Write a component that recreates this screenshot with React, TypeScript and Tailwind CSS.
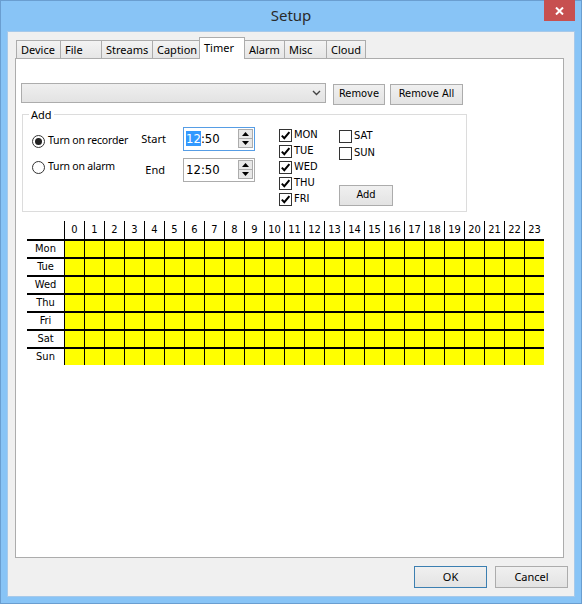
import React from "react";

const tahoma = "font-['DejaVu_Sans_Condensed','Liberation_Sans',sans-serif]";
const segoe = "font-['Noto_Sans','Liberation_Sans',sans-serif] whitespace-nowrap";

const tabs = [
  { label: "Device", w: "w-[45px]" },
  { label: "File", w: "w-[42px]" },
  { label: "Streams", w: "w-[52px]" },
  { label: "Caption", w: "w-[48px]" },
  { label: "Timer", w: "w-[46px]" },
  { label: "Alarm", w: "w-[41px]" },
  { label: "Misc", w: "w-[43px]" },
  { label: "Cloud", w: "w-[40px]" },
];

const days = ["Mon", "Tue", "Wed", "Thu", "Fri", "Sat", "Sun"];
const hours = Array.from({ length: 24 }, (_, i) => i);

function CheckBox({ checked, label }: { checked: boolean; label: string }) {
  return (
    <div className="flex h-[16px] items-center">
      <div className="flex h-[13px] w-[13px] items-center justify-center border border-[#333] bg-white">
        {checked && (
          <svg width="11" height="11" viewBox="0 0 11 11">
            <path d="M1.8 5.6 L4.3 8.2 L9.4 2.2" fill="none" stroke="#000" strokeWidth="2" />
          </svg>
        )}
      </div>
      <span className={`${tahoma} ml-[2px] text-[11px] text-black`}>{label}</span>
    </div>
  );
}

function Radio({ checked, label }: { checked: boolean; label: string }) {
  return (
    <div className="flex h-[16px] items-center">
      <div className="flex h-[13px] w-[13px] shrink-0 items-center justify-center rounded-full border border-[#333] bg-white">
        {checked && <div className="h-[7px] w-[7px] rounded-full bg-[#222]" />}
      </div>
      <span className={`${segoe} ml-[3px] text-[10.5px] tracking-[-0.2px] text-black`}>{label}</span>
    </div>
  );
}

function SpinBox({ focused }: { focused?: boolean }) {
  return (
    <div
      className={`flex h-[24px] w-[72px] items-center bg-white pl-[2px] pr-[1px] ${
        focused ? "border border-[#569de5]" : "border border-[#acacac]"
      }`}
    >
      <span className={`${tahoma} text-[13px] leading-[16px] text-black`}>
        {focused ? <span className="bg-[#3399ff] text-white">12</span> : "12"}:50
      </span>
      <div className="ml-auto flex h-[20px] w-[15px] flex-col">
        <div className="flex h-[10px] items-center justify-center border border-[#acacac] bg-[#e8e8e8]">
          <svg width="7" height="4" viewBox="0 0 7 4">
            <path d="M0 4 L3.5 0 L7 4 Z" fill="#000" />
          </svg>
        </div>
        <div className="-mt-px flex h-[10px] items-center justify-center border border-[#acacac] bg-[#e8e8e8]">
          <svg width="7" height="4" viewBox="0 0 7 4">
            <path d="M0 0 L3.5 4 L7 0 Z" fill="#000" />
          </svg>
        </div>
      </div>
    </div>
  );
}

function Button({ label, w, font }: { label: string; w: string; font: string }) {
  return (
    <div
      className={`${w} ${font} flex h-[21px] items-center justify-center border border-[#acacac] bg-linear-to-b from-[#f0f0f0] to-[#e3e3e3] text-[11px] text-black`}
    >
      {label}
    </div>
  );
}

export default function App() {
  return (
    <div className="flex h-[604px] w-[582px] flex-col border border-[#6a9ed0] bg-[#88c4f6]">
      {/* title bar */}
      <div className="grid h-[30px] shrink-0 grid-cols-[1fr_auto_1fr]">
        <div />
        <div className={`${segoe} pt-[4px] text-[15px] leading-[20px] text-[#2a2a2a]`}>Setup</div>
        <div className="flex justify-end pr-[6px]">
          <div className="-mt-px flex h-[21px] w-[31px] items-center justify-center bg-[#c75050]">
            <svg width="9" height="8" viewBox="0 0 9 8">
              <path d="M1 0.5 L8 7.5 M8 0.5 L1 7.5" stroke="#fff" strokeWidth="2" />
            </svg>
          </div>
        </div>
      </div>

      {/* client */}
      <div className="mx-[6px] mb-[6px] flex flex-1 flex-col border border-[#a6c9ea] bg-[#f0f0f0] pt-[6px]">
        {/* tabs */}
        <div className="flex h-[20px] items-end pl-[8px]">
          {tabs.map((t) => {
            const sel = t.label === "Timer";
            return (
              <div
                key={t.label}
                className={`${t.w} ${segoe} -ml-px flex items-start border border-b-0 border-[#acacac] pl-[4px] text-[11px] text-black first:ml-0 ${
                  sel
                    ? "relative z-10 mb-[-1px] h-[22px] bg-white pt-[2px]"
                    : "h-[18px] bg-linear-to-b from-[#f3f3f3] to-[#e6e6e6] pt-[1px]"
                }`}
              >
                <span className="leading-[15px]">{t.label}</span>
              </div>
            );
          })}
        </div>

        {/* panel */}
        <div className="ml-[7px] flex h-[500px] w-[549px] flex-col border border-[#acacac] bg-white">
          {/* combobox row */}
          <div className="ml-[5px] mt-[24px] flex items-start">
            <div className="flex h-[20px] w-[305px] items-center justify-end border border-[#acacac] bg-linear-to-b from-[#efefef] to-[#e3e3e3] pr-[4px]">
              <svg width="9" height="6" viewBox="0 0 9 6">
                <path d="M1 1 L4.5 4.5 L8 1" fill="none" stroke="#444" strokeWidth="1.4" />
              </svg>
            </div>
            <div className="ml-[7px] mt-px">
              <Button label="Remove" w="w-[52px]" font={tahoma} />
            </div>
            <div className="ml-[5px] mt-px">
              <Button label="Remove All" w="w-[73px]" font={tahoma} />
            </div>
          </div>

          {/* Add group */}
          <div className="relative ml-[6px] mt-[9px] flex h-[98px] w-[445px] items-start border border-[#dcdcdc]">
            <span className={`${segoe} absolute -top-[8px] left-[6px] bg-white px-[2px] text-[11px] leading-[15px] text-black`}>
              Add
            </span>

            <div className="ml-[9px] mt-[18px] flex w-[100px] flex-col gap-[10px]">
              <Radio checked label="Turn on recorder" />
              <Radio checked={false} label="Turn on alarm" />
            </div>

            <div className="mt-[12px] flex flex-col gap-[7px]">
              <div className="flex items-center">
                <span className={`${segoe} w-[34px] text-right text-[11px] text-black`}>Start</span>
                <div className="ml-[17px]">
                  <SpinBox focused />
                </div>
              </div>
              <div className="flex items-center">
                <span className={`${segoe} w-[34px] pr-[1px] text-right text-[11px] text-black`}>End</span>
                <div className="ml-[17px]">
                  <SpinBox />
                </div>
              </div>
            </div>

            <div className="ml-[24px] mt-[12px] flex w-[60px] flex-col">
              <CheckBox checked label="MON" />
              <CheckBox checked label="TUE" />
              <CheckBox checked label="WED" />
              <CheckBox checked label="THU" />
              <CheckBox checked label="FRI" />
            </div>

            <div className="mt-[13px] flex flex-col gap-[1px]">
              <CheckBox checked={false} label="SAT" />
              <CheckBox checked={false} label="SUN" />
              <div className="mt-[23px]">
                <Button label="Add" w="w-[54px]" font={tahoma} />
              </div>
            </div>
          </div>

          {/* timer grid */}
          <div className={`${tahoma} ml-[11px] mt-[9px] flex flex-col text-[11px] text-black`}>
            <div className="flex h-[18px]">
              <div className="w-[37px]" />
              {hours.map((h) => (
                <div key={h} className="w-[20px] border-l border-black text-center leading-[18px]">
                  {h}
                </div>
              ))}
            </div>
            {days.map((d) => (
              <div key={d} className="flex h-[18px]">
                <div className="w-[37px] border-t-2 border-black text-center leading-[16px]">{d}</div>
                {hours.map((h) => (
                  <div key={h} className="w-[20px] border-l border-t-2 border-black bg-[#ffff00]" />
                ))}
              </div>
            ))}
          </div>
        </div>

        {/* bottom buttons */}
        <div className="mr-[6px] mt-[8px] flex justify-end gap-[8px]">
          <div className={`${segoe} flex h-[22px] w-[73px] items-center justify-center border border-[#3c7fb1] bg-linear-to-b from-[#f0f0f0] to-[#e3e3e3] text-[11px] text-black`}>
            OK
          </div>
          <div className={`${segoe} flex h-[22px] w-[73px] items-center justify-center border border-[#acacac] bg-linear-to-b from-[#f0f0f0] to-[#e3e3e3] text-[11px] text-black`}>
            Cancel
          </div>
        </div>
      </div>
    </div>
  );
}
